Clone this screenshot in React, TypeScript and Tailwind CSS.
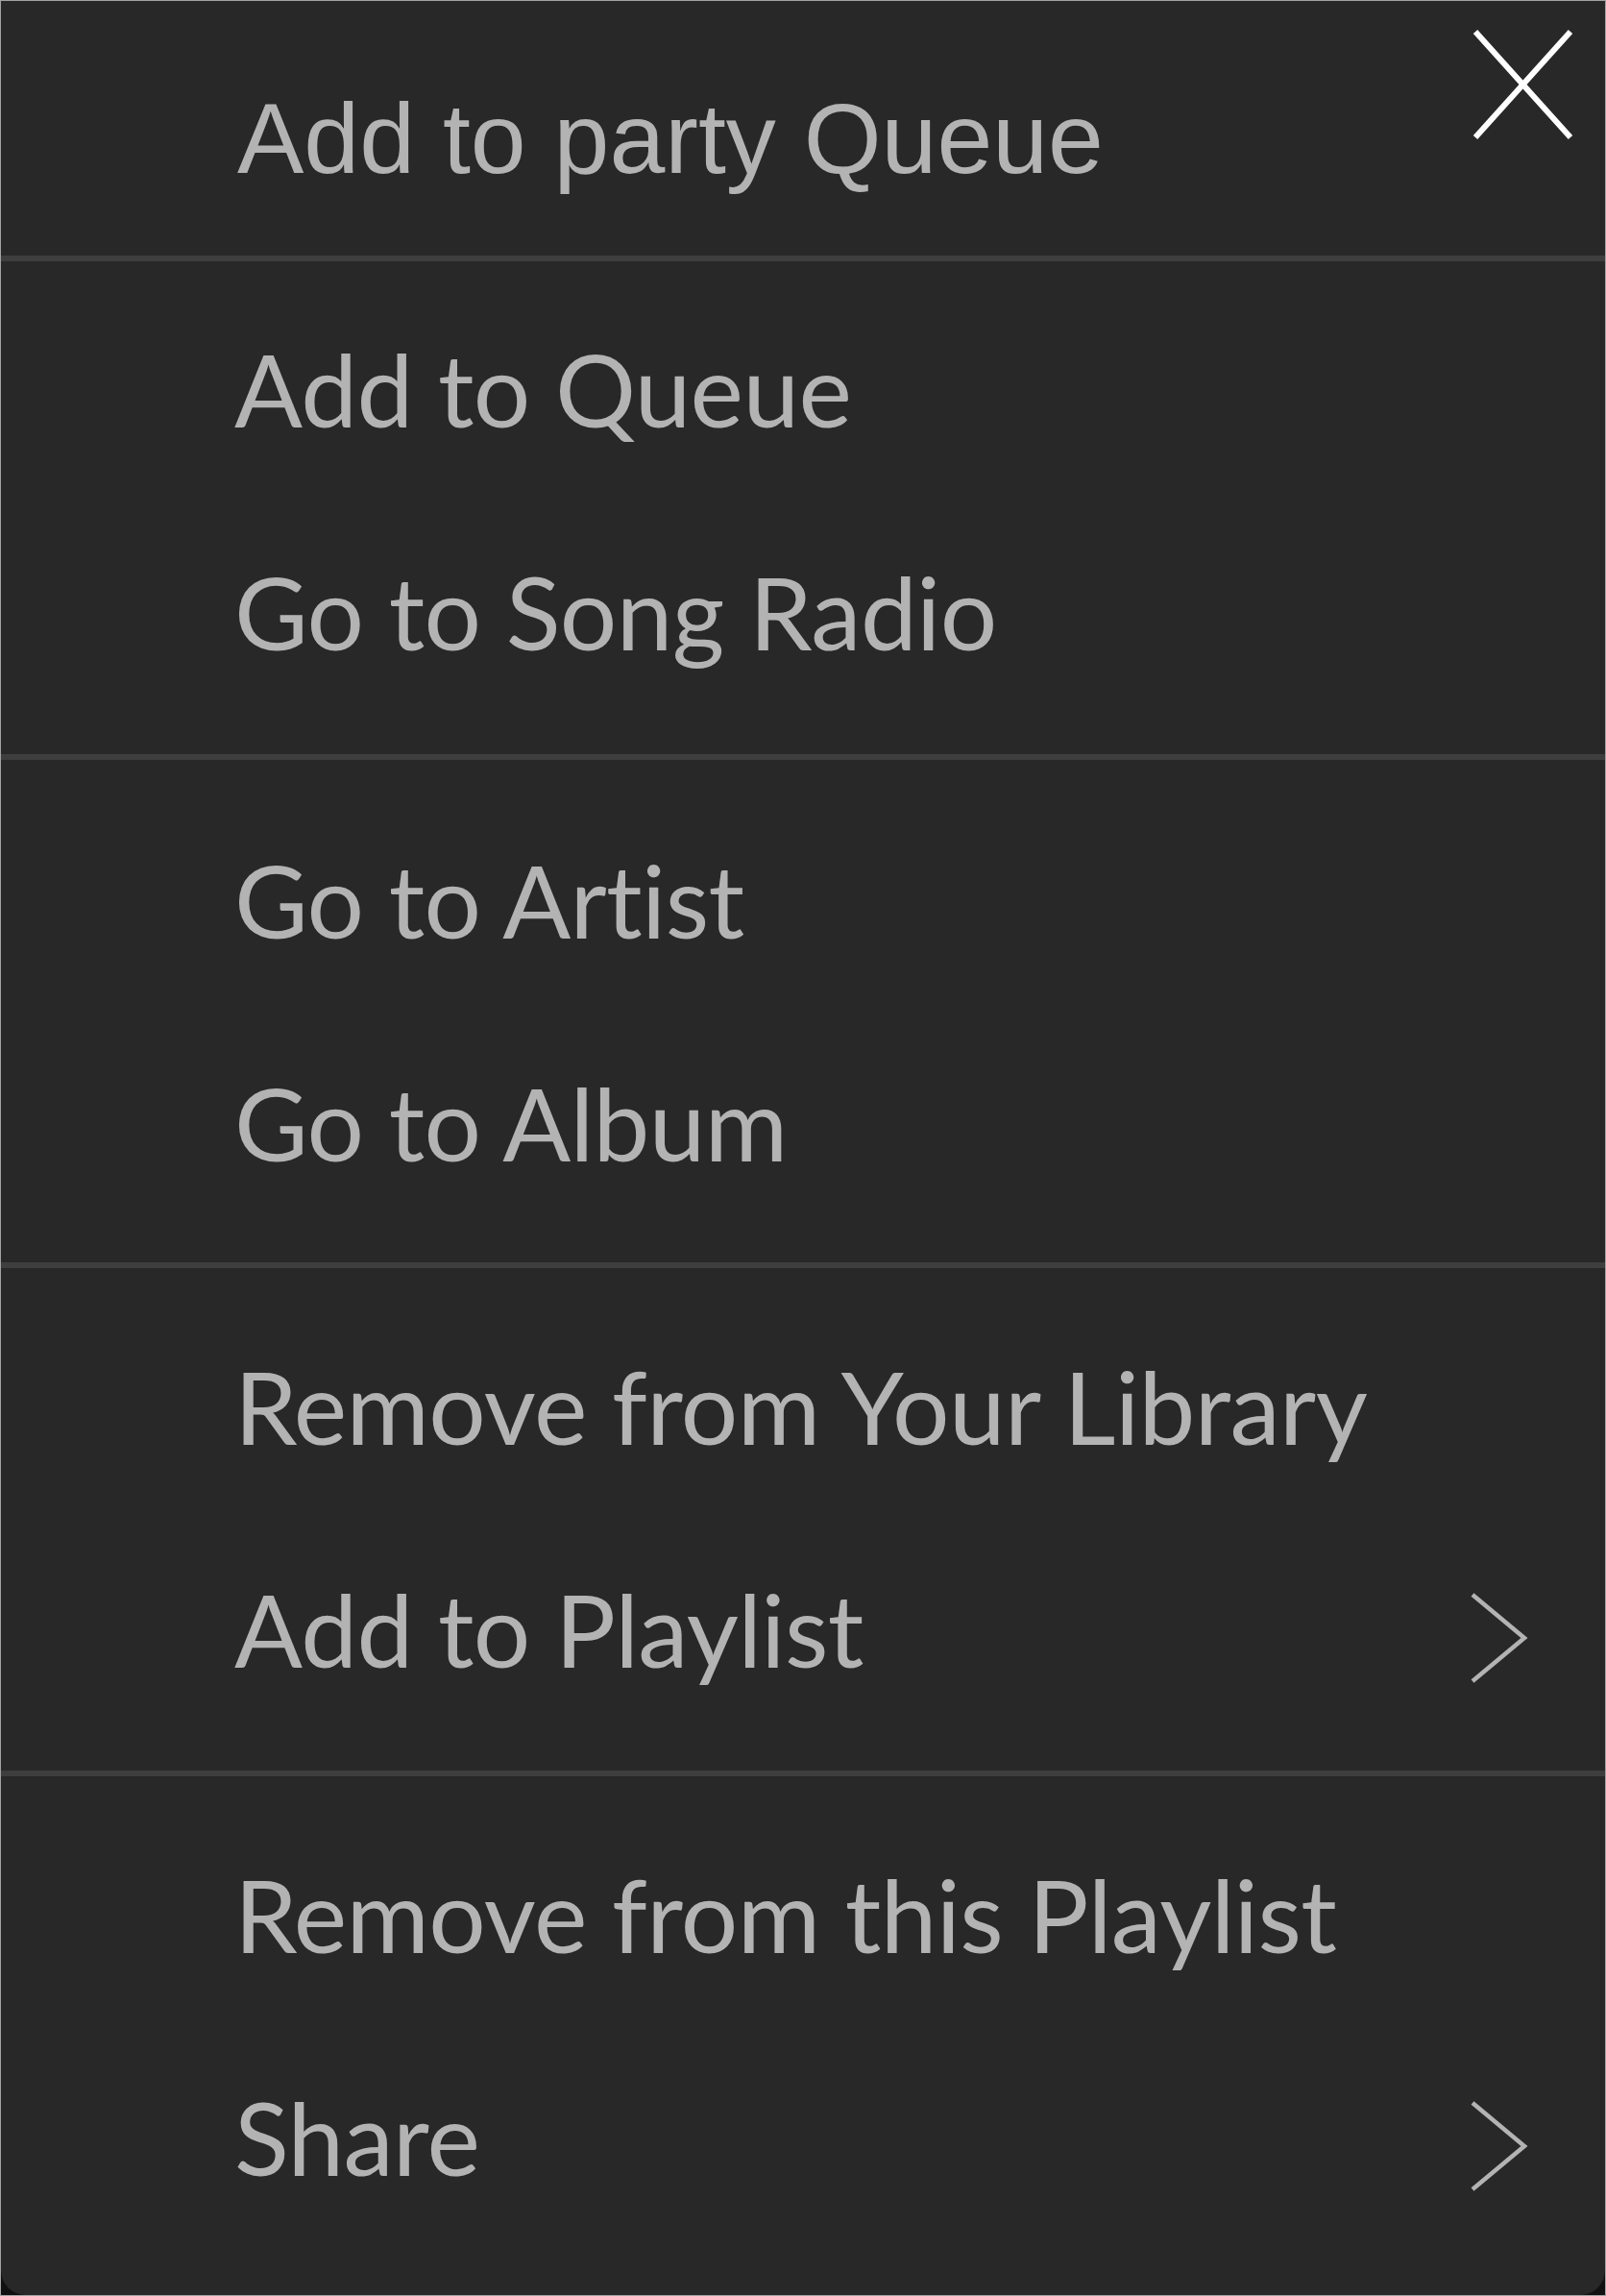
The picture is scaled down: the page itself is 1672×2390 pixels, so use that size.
import React from "react";

type Item = { label: string; more?: boolean };

const groups: { items: Item[]; pad: string }[] = [
  {
    pad: "pt-[16px] pb-[33px]",
    items: [{ label: "Add to Queue" }, { label: "Go to Song Radio" }],
  },
  {
    pad: "pt-[29px] pb-[30px]",
    items: [{ label: "Go to Artist" }, { label: "Go to Album" }],
  },
  {
    pad: "pt-[27px] pb-[32px]",
    items: [
      { label: "Remove from Your Library" },
      { label: "Add to Playlist", more: true },
    ],
  },
  {
    pad: "pt-[27px]",
    items: [
      { label: "Remove from this Playlist" },
      { label: "Share", more: true },
    ],
  },
];

function CloseIcon() {
  return (
    <svg width="105" height="116" viewBox="0 0 105 116" className="mt-[29px] mr-[33px] shrink-0">
      <line x1="3" y1="3" x2="102" y2="113" stroke="#ffffff" strokeWidth="6" />
      <line x1="102" y1="3" x2="3" y2="113" stroke="#ffffff" strokeWidth="6" />
    </svg>
  );
}

function Chevron() {
  return (
    <svg width="62" height="96" viewBox="0 0 62 96" className="mt-[20px] mr-[79px] shrink-0">
      <polyline
        points="3,3 57,48 3,93"
        fill="none"
        stroke="#b3b3b3"
        strokeWidth="4.5"
      />
    </svg>
  );
}

function MenuRow({ item }: { item: Item }) {
  return (
    <div className="h-[232px] flex items-center justify-between pl-[243px]">
      <span className="font-['Lato',sans-serif] text-[105px] tracking-[-0.6px] [font-variant-ligatures:none] leading-[232px] text-[#b3b3b3] whitespace-nowrap">
        {item.label}
      </span>
      {item.more && <Chevron />}
    </div>
  );
}

export default function App() {
  return (
    <div className="w-[1672px] h-[2390px] border border-[#a3a3a3] bg-[#111111]">
      <div className="h-full bg-[#282828] rounded-b-[26px] flex flex-col">
        <div className="h-[265px] flex justify-between items-start">
          <span className="pl-[246px] pt-[91px] font-['Liberation_Sans',Arial,sans-serif] text-[104px] leading-none text-[#b3b3b3] whitespace-nowrap">
            Add to party Queue
          </span>
          <CloseIcon />
        </div>
        {groups.map((g, i) => (
          <div key={i}>
            <div className="h-[6px] bg-[#3e3e3e]" />
            <div className={g.pad}>
              {g.items.map((item) => (
                <MenuRow key={item.label} item={item} />
              ))}
            </div>
          </div>
        ))}
      </div>
    </div>
  );
}
